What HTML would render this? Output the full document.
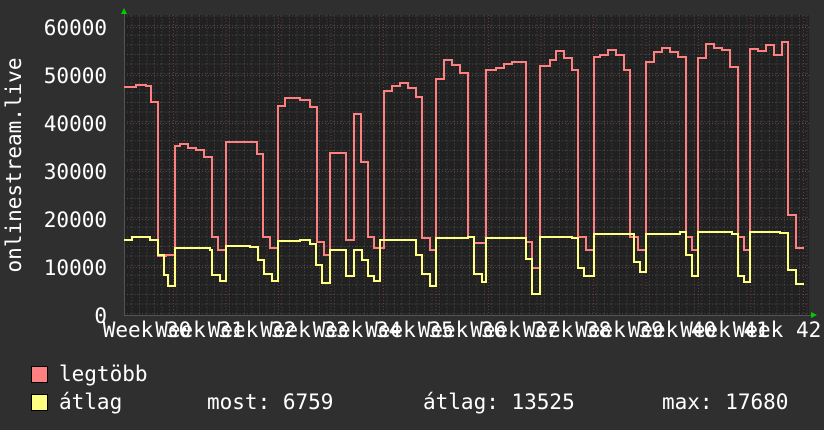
<!DOCTYPE html>
<html><head><meta charset="utf-8"><style>
html,body{margin:0;padding:0;background:#2f2f2f;width:824px;height:430px;overflow:hidden}
svg{display:block}
text{font-family:"DejaVu Sans Mono","Liberation Mono",monospace;font-size:21px;fill:#fff}
</style></head><body>
<svg width="824" height="430" xmlns="http://www.w3.org/2000/svg">
<defs>
<pattern id="mg" x="124" y="15.6" width="7.5" height="9.6" patternUnits="userSpaceOnUse">
<line x1="0.5" y1="0" x2="0.5" y2="9.6" stroke="#4a4a4a" stroke-width="1" stroke-dasharray="1,2"/>
<line x1="0" y1="0.5" x2="7.5" y2="0.5" stroke="#4a4a4a" stroke-width="1" stroke-dasharray="1,2"/>
</pattern>
</defs>
<rect x="0" y="0" width="824" height="430" fill="#2f2f2f"/>
<rect x="124" y="15" width="685" height="300" fill="#212121"/>
<rect x="124" y="15" width="685" height="300" fill="url(#mg)"/>
<g stroke="#6b3a3a" stroke-width="1" stroke-dasharray="1,2">
<line x1="124" y1="27.5" x2="809" y2="27.5"/><line x1="124" y1="75.5" x2="809" y2="75.5"/>
<line x1="124" y1="123.5" x2="809" y2="123.5"/><line x1="124" y1="171.5" x2="809" y2="171.5"/>
<line x1="124" y1="219.5" x2="809" y2="219.5"/><line x1="124" y1="267.5" x2="809" y2="267.5"/>
<line x1="173.5" y1="15" x2="173.5" y2="318"/><line x1="226" y1="15" x2="226" y2="318"/>
<line x1="278.5" y1="15" x2="278.5" y2="318"/><line x1="331" y1="15" x2="331" y2="318"/>
<line x1="383.5" y1="15" x2="383.5" y2="318"/><line x1="436" y1="15" x2="436" y2="318"/>
<line x1="488.5" y1="15" x2="488.5" y2="318"/><line x1="541" y1="15" x2="541" y2="318"/>
<line x1="593.5" y1="15" x2="593.5" y2="318"/><line x1="646" y1="15" x2="646" y2="318"/>
<line x1="698.5" y1="15" x2="698.5" y2="318"/><line x1="751" y1="15" x2="751" y2="318"/>
<line x1="803.5" y1="15" x2="803.5" y2="318"/>
</g>
<line x1="124" y1="315.5" x2="812" y2="315.5" stroke="#555" stroke-width="1"/>
<line x1="124.5" y1="12" x2="124.5" y2="315" stroke="#555" stroke-width="1"/>
<polygon points="121,14 127,14 124,8" fill="#00cc00"/>
<polygon points="811,312 811,318 817,315" fill="#00cc00"/>
<path fill="none" stroke="#ff8080" stroke-width="2" d="M124 87 H136 V85 H146 V86 H151 V102 H158 V256 H166 V255 H175 V146 H180 V144 H188 V148 H196 V150 H204 V157 H212 V237 H218 V250 H226 V142 H257 V154 H263 V237 H270 V248 H278 V106 H285 V98 H300 V100 H310 V107 H317 V242 H324 V255 H330 V153 H346 V240 H354 V114 H361 V162 H368 V237 H374 V248 H384 V91 H392 V86 H400 V83 H408 V88 H416 V97 H422 V238 H430 V250 H436 V79 H444 V60 H452 V65 H460 V73 H468 V237 H474 V243 H486 V70 H496 V68 H504 V64 H512 V62 H526 V242 H532 V268 H540 V66 H550 V60 H556 V51 H564 V58 H572 V70 H578 V237 H586 V250 H594 V57 H600 V55 H608 V50 H616 V55 H624 V70 H630 V237 H638 V250 H646 V62 H654 V52 H662 V48 H670 V52 H678 V57 H686 V237 H692 V250 H698 V58 H706 V44 H714 V48 H722 V50 H730 V67 H738 V237 H744 V250 H750 V49 H758 V51 H766 V45 H774 V55 H782 V42 H788 V215 H796 V248 H804"/>
<path fill="none" stroke="#ffff80" stroke-width="2" d="M124 240 H132 V237 H150 V240 H158 V255 H164 V275 H168 V286 H175 V248 H210 V250 H212 V275 H220 V281 H226 V246 H250 V247 H258 V260 H264 V274 H272 V281 H278 V241 H300 V240 H310 V244 H316 V265 H322 V283 H330 V250 H346 V276 H354 V250 H362 V260 H368 V276 H374 V281 H380 V240 H408 V240 H416 V255 H422 V274 H430 V286 H436 V238 H468 V237 H474 V274 H482 V282 H486 V238 H520 V238 H526 V259 H532 V294 H540 V237 H572 V238 H578 V268 H584 V276 H594 V234 H628 V234 H634 V262 H640 V272 H646 V234 H680 V232 H686 V255 H692 V276 H698 V232 H732 V234 H738 V276 H744 V282 H750 V232 H780 V233 H788 V270 H796 V284 H804"/>
<g text-anchor="end">
<text x="107" y="35">60000</text><text x="107" y="83">50000</text>
<text x="107" y="131">40000</text><text x="107" y="179">30000</text>
<text x="107" y="227">20000</text><text x="107" y="275">10000</text>
<text x="107" y="323">0</text>
</g>
<text transform="translate(21,165) rotate(-90)" text-anchor="middle">onlinestream.live</text>
<g text-anchor="middle">
<text x="147" y="337">Week 30</text><text x="199.5" y="337">Week 31</text>
<text x="252" y="337">Week 32</text><text x="304.5" y="337">Week 33</text>
<text x="357" y="337">Week 34</text><text x="409.5" y="337">Week 35</text>
<text x="462" y="337">Week 36</text><text x="514.5" y="337">Week 37</text>
<text x="567" y="337">Week 38</text><text x="619.5" y="337">Week 39</text>
<text x="672" y="337">Week 40</text><text x="724.5" y="337">Week 41</text>
<text x="777" y="337">Week 42</text>
</g>
<rect x="31.5" y="366.5" width="16" height="16" fill="#ff8080" stroke="#000" stroke-width="1"/>
<rect x="31.5" y="394.5" width="16" height="16" fill="#ffff80" stroke="#000" stroke-width="1"/>
<text x="59" y="381">legtöbb</text>
<text x="59" y="409">átlag</text>
<text x="207" y="409">most: 6759</text>
<text x="423" y="409">átlag: 13525</text>
<text x="662" y="409">max: 17680</text>
</svg>
</body></html>
